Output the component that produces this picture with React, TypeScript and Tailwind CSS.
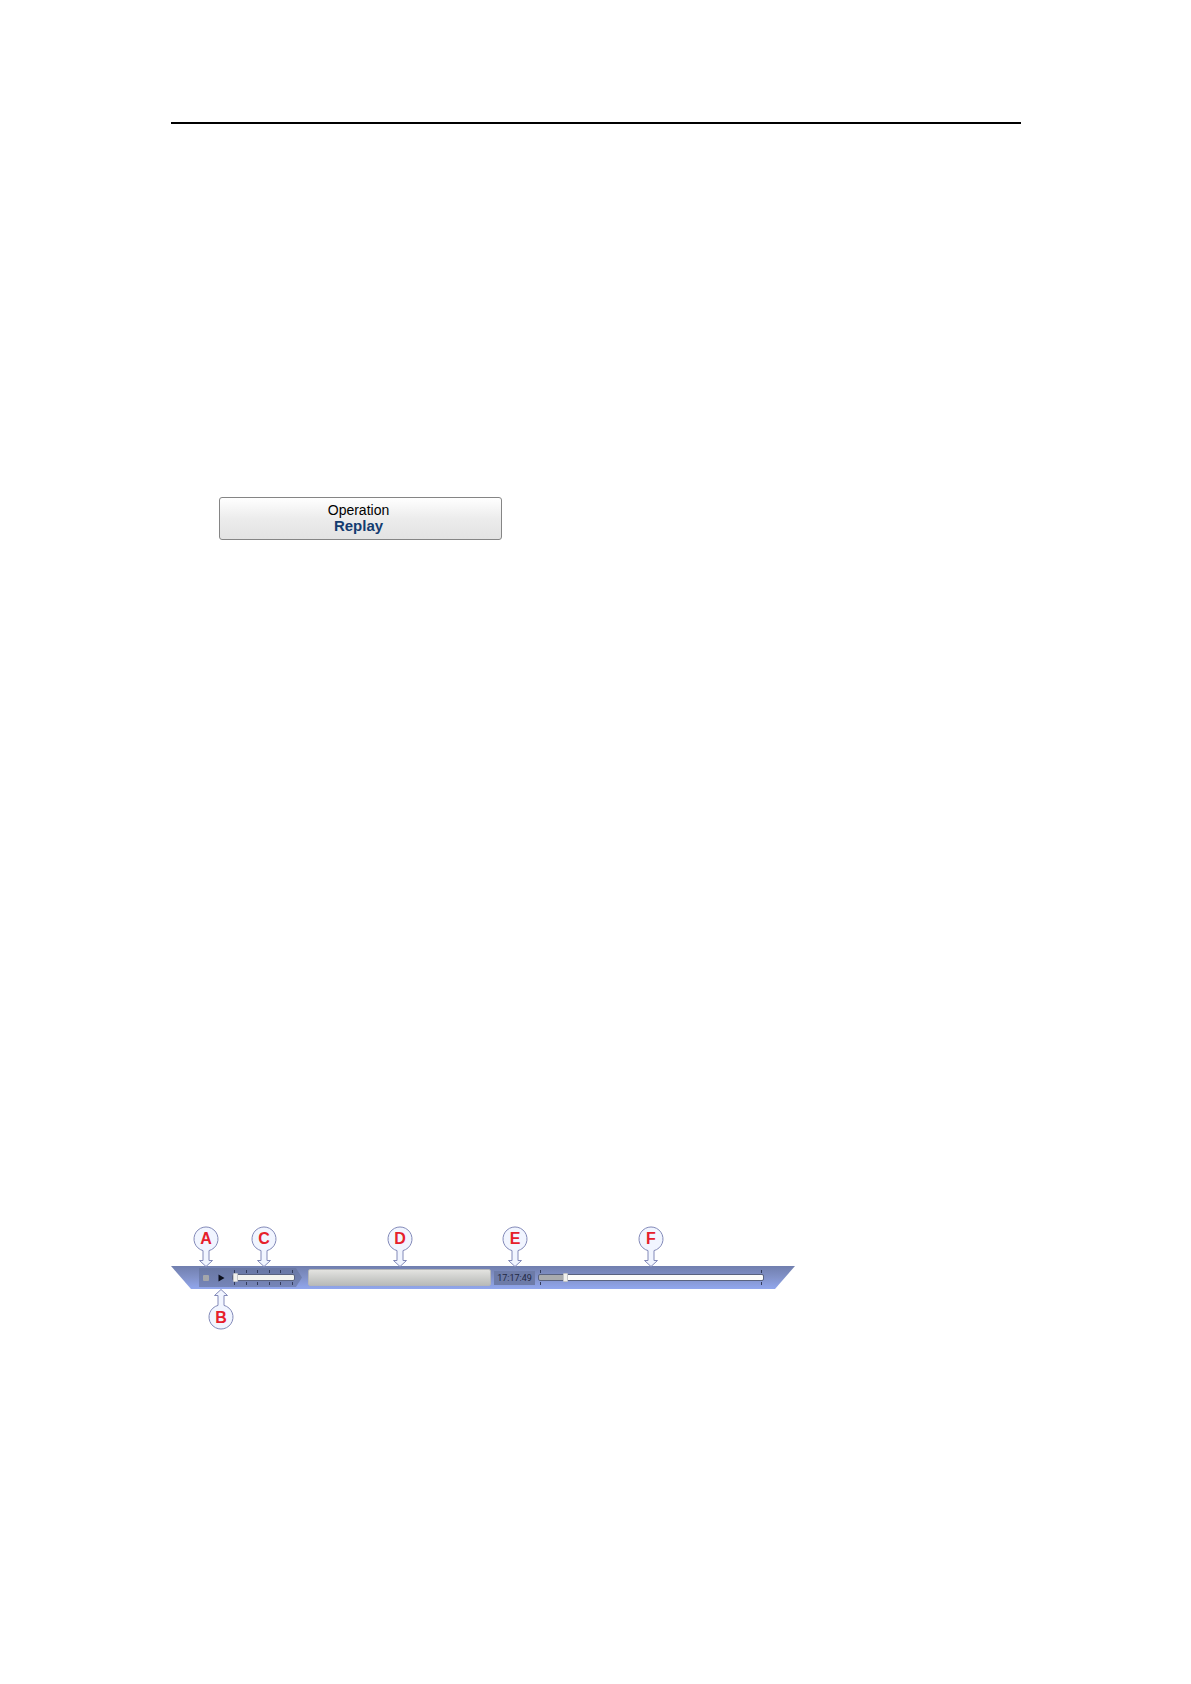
import React from 'react'

type CalloutProps = { letter: string; below?: boolean }

// Lettered balloon with an arrow pointing at the control it belongs to
const Callout = ({ letter, below = false }: CalloutProps) => {
  return (
    <span className={`pointer-events-none absolute left-1/2 -translate-x-1/2 ${below ? 'top-full' : 'bottom-full'}`}>
      <svg width="26" height="40" viewBox="0 0 26 40" className="block max-w-none overflow-visible">
        <path
          d="M10 24.6 A12 12 0 1 1 16 24.6 V34.5 H19.5 L13 40.5 L6.5 34.5 H10 Z"
          transform={below ? 'matrix(1 0 0 -1 0 41)' : undefined}
          fill="#f1f5ff"
          stroke="#8289b8"
          strokeWidth="1"
        />
        <text
          x="13"
          y={below ? 34 : 18}
          textAnchor="middle"
          className="fill-[#e6202b] font-['Liberation_Sans',Arial,sans-serif] text-[16px] font-bold"
        >
          {letter}
        </text>
      </svg>
    </span>
  )
}

const Ticks = ({ count }: { count: number }) => {
  return (
    <span className="flex justify-between px-[2px]">
      {Array.from({ length: count }, (_, i) => (
        <span key={i} className="h-[3px] w-px bg-[#333c5c]" />
      ))}
    </span>
  )
}

type SliderProps = { label: string; value: number; ticks: number; track: string }

const Slider = ({ label, value, ticks, track }: SliderProps) => {
  return (
    <span className="flex h-full flex-col justify-center">
      <Ticks count={ticks} />
      <input
        type="range"
        aria-label={label}
        defaultValue={value}
        className={`block h-[9px] w-full appearance-none bg-transparent [&::-webkit-slider-runnable-track]:h-[7px] [&::-webkit-slider-runnable-track]:rounded-[2px] [&::-webkit-slider-runnable-track]:border [&::-webkit-slider-runnable-track]:border-[#5a637f] [&::-webkit-slider-thumb]:-mt-[2px] [&::-webkit-slider-thumb]:h-[9px] [&::-webkit-slider-thumb]:w-[5px] [&::-webkit-slider-thumb]:appearance-none [&::-webkit-slider-thumb]:rounded-[1px] [&::-webkit-slider-thumb]:border [&::-webkit-slider-thumb]:border-[#c3c5c8] [&::-webkit-slider-thumb]:bg-[#f1f1ee] ${track}`}
      />
      <Ticks count={ticks} />
    </span>
  )
}

const ReplayBar = () => {
  return (
    <div className="relative flex h-[23px] w-full max-w-[624px] items-stretch pl-7 pr-[31px]">
      <div className="absolute inset-0 bg-linear-to-b from-[#717fae] via-[#8292c9] to-[#91a7ee] [clip-path:polygon(0_0,100%_0,calc(100%_-_20px)_100%,20px_100%)]" />
      <div className="relative flex w-[103px] shrink-0 gap-[7px] pl-[3px]">
        <div className="absolute inset-x-0 top-[2px] bottom-[2px] bg-linear-to-b from-[#6977a3] to-[#7585b8] [clip-path:polygon(0_0,calc(100%_-_6px)_0,100%_50%,calc(100%_-_6px)_100%,0_100%)]" />
        <button aria-label="Stop" className="relative flex w-2 items-center justify-center">
          <span className="size-[6px] rounded-[1px] bg-[#a4a6ab]" />
          <Callout letter="A" />
        </button>
        <button aria-label="Play" className="relative flex w-2 items-center justify-center">
          <svg width="7" height="8" viewBox="0 0 7 8">
            <path d="M0.5 0.5 L6.5 4 L0.5 7.5 Z" fill="#0c0f1c" />
          </svg>
          <Callout letter="B" below />
        </button>
        <div className="relative w-[63px]">
          <Slider
            label="Speed"
            value={0}
            ticks={6}
            track="[&::-webkit-slider-runnable-track]:bg-[#f4f4ef]"
          />
          <Callout letter="C" />
        </div>
      </div>
      <div className="relative ml-[6px] flex w-[183px] shrink-0 items-center">
        <input
          type="text"
          readOnly
          aria-label="File name"
          className="h-[17px] w-full rounded-[2px] border border-[#b5b7b9] bg-linear-to-b from-[#e3e3e0] to-[#b9bbb9] px-1 text-[10px]"
        />
        <Callout letter="D" />
      </div>
      <div className="relative ml-[3px] flex w-[41px] shrink-0 items-center">
        <time className="mt-px h-[14px] w-full bg-[#6d7ba8] text-center font-[Roboto,sans-serif] text-[9px] leading-[15px] text-[#1f2742]">17:17:49</time>
        <Callout letter="E" />
      </div>
      <div className="relative ml-[3px] flex-1">
        <Slider
          label="Position"
          value={11}
          ticks={2}
          track="[&::-webkit-slider-runnable-track]:bg-[linear-gradient(90deg,#a9abae_12%,#fdfdfb_12%)]"
        />
        <Callout letter="F" />
      </div>
    </div>
  )
}

const App = () => {
  return (
    <main className="min-h-screen bg-white pt-[122px] pr-[170px] pb-16 pl-[171px] font-['Liberation_Sans',Arial,sans-serif]">
      <hr className="border-t-2 border-black" />
      <button className="mt-[373px] ml-12 flex h-[43px] w-[283px] flex-col items-center justify-center rounded-[3px] border border-[#858585] bg-linear-to-b from-white via-[#ececec] to-[#e3e3e3] pr-1 pb-[2px] text-[14px] leading-4 text-black">
        <span>Operation</span>
        <span className="text-[15px] font-bold text-[#143c70]">Replay</span>
      </button>
      <div className="mt-[726px]">
        <ReplayBar />
      </div>
    </main>
  )
}

export default App
